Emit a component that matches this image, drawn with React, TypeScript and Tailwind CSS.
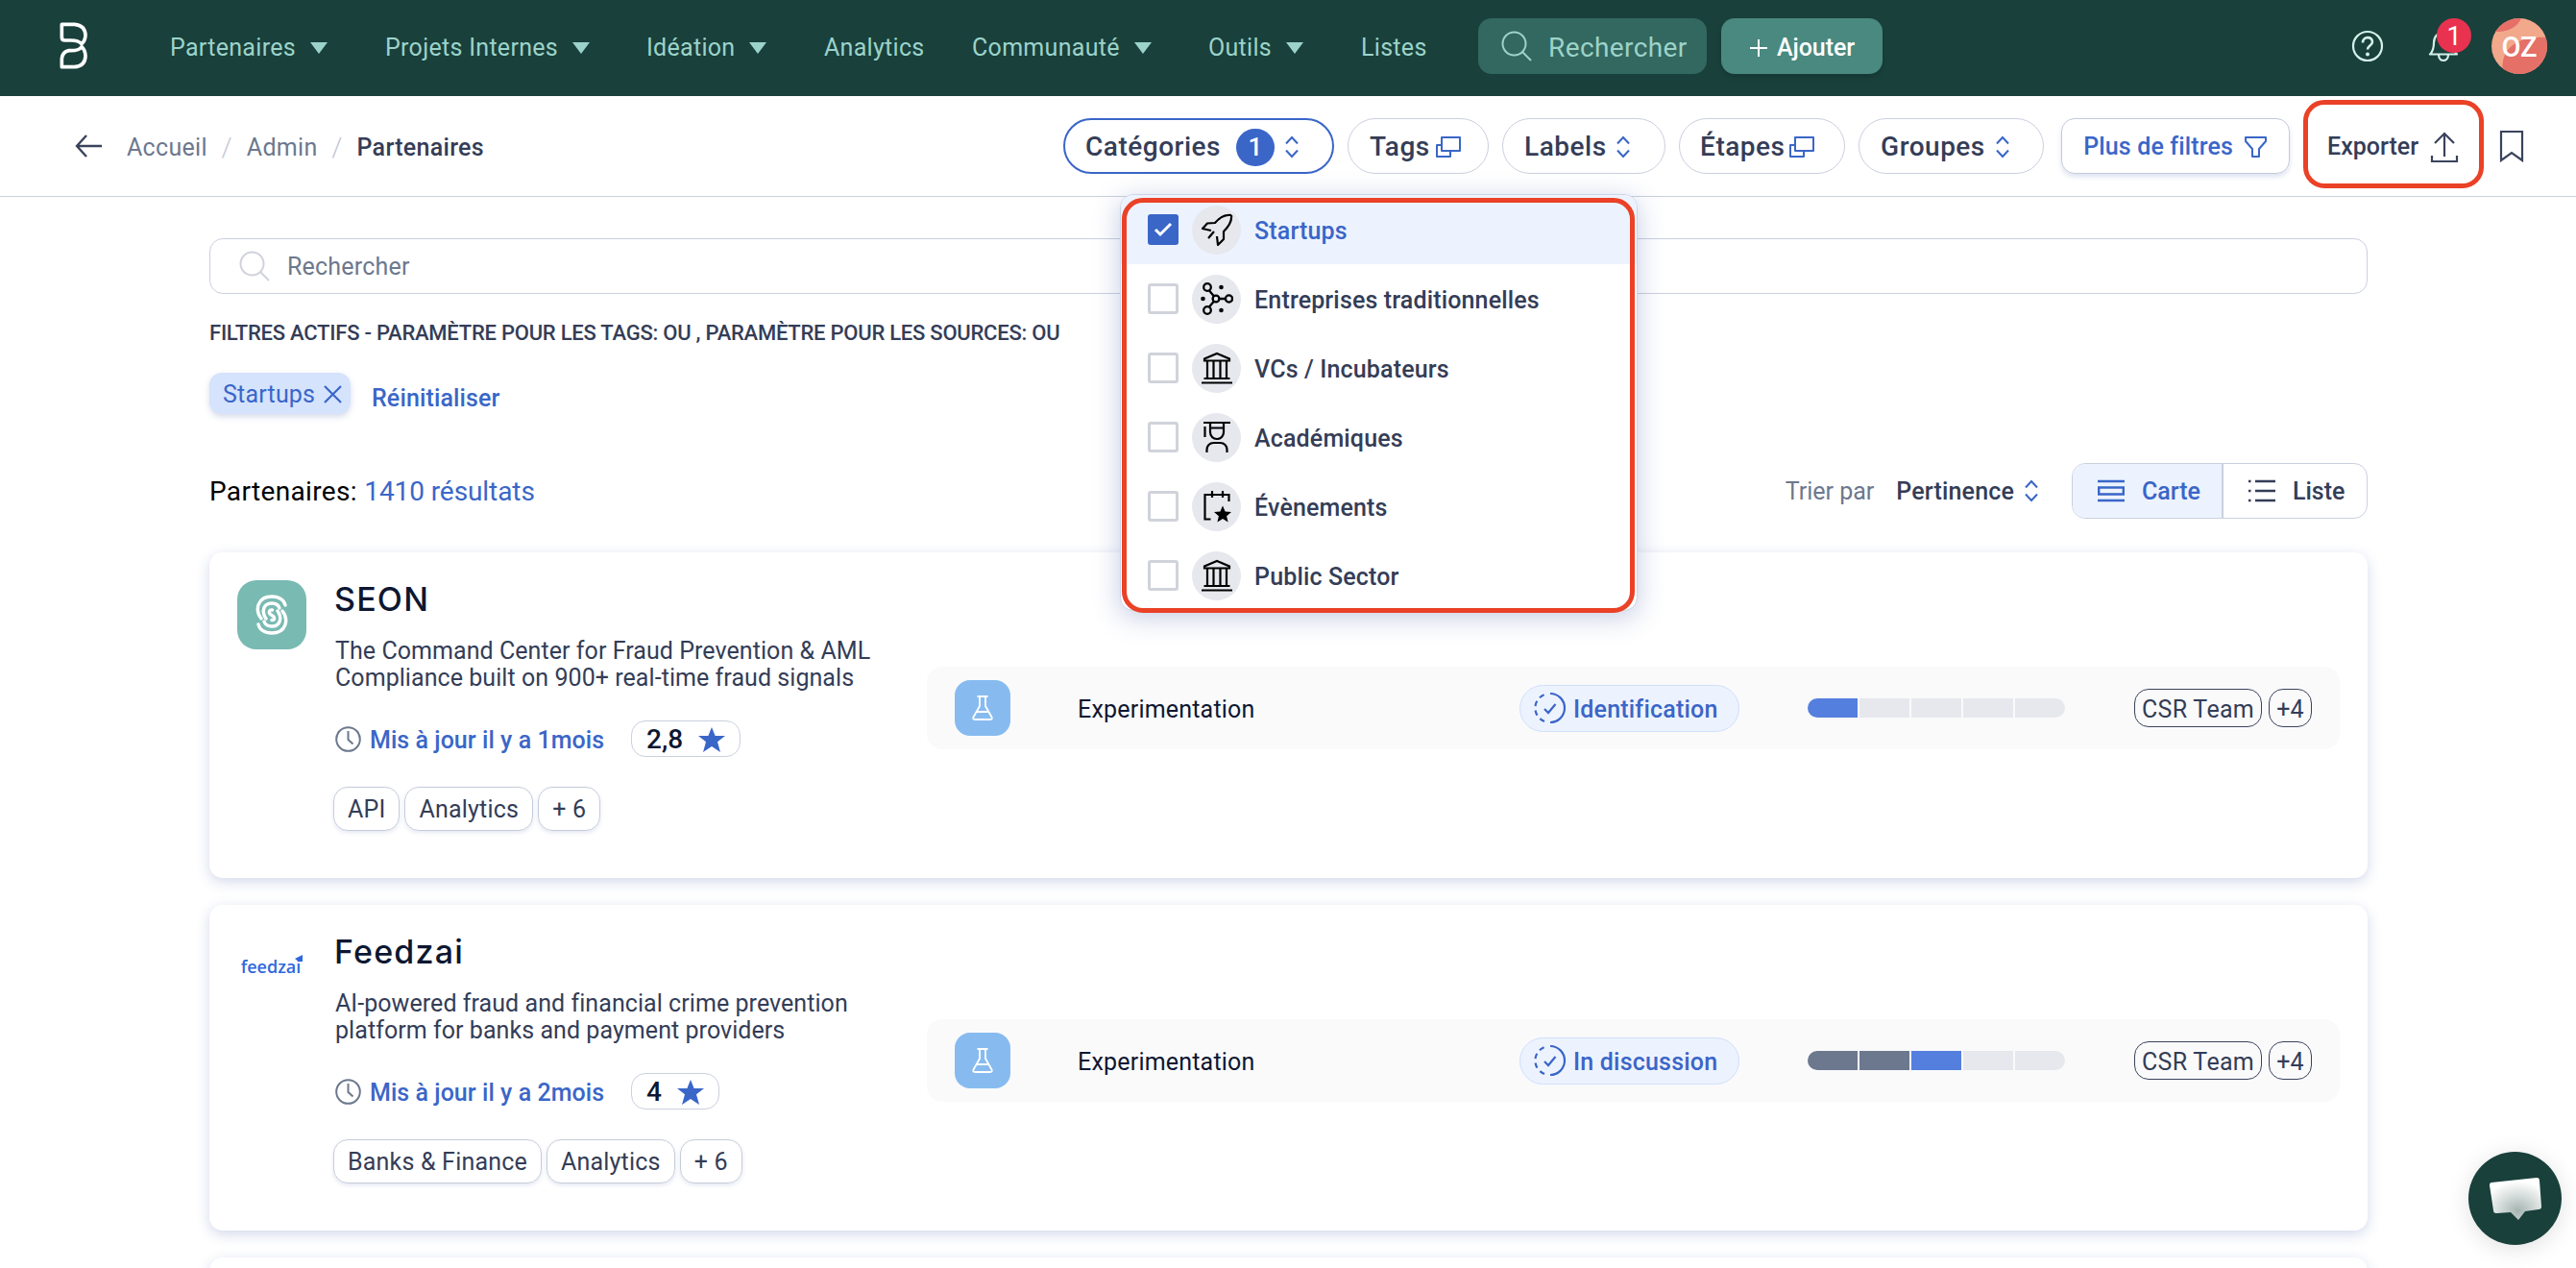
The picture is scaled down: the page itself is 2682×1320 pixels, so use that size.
import React from "react";

const Caret = () => (
  <svg width="18" height="12" viewBox="0 0 18 12" fill="currentColor">
    <path d="M0 0h18L9 12z" />
  </svg>
);

const Chevrons = () => (
  <svg
    width="16"
    height="24"
    viewBox="0 0 16 24"
    fill="none"
    stroke="#3a66c8"
    strokeWidth="2"
  >
    <path d="M2 8.500 8 2l6 6.500M2 15.500 8 22l6-6.500" />
  </svg>
);

const Copies = () => (
  <svg
    width="27"
    height="24"
    viewBox="0 0 27 24"
    fill="none"
    stroke="#3a66c8"
    strokeWidth="2"
  >
    <path d="M7 2h19v14H7zM6 10H2v12h14v-5" strokeLinejoin="round" />
  </svg>
);

const Search = ({ className }: { className: string }) => (
  <svg
    width="32"
    height="32"
    viewBox="0 0 32 32"
    fill="none"
    stroke="currentColor"
    strokeWidth="2"
    className={className}
  >
    <circle cx="13.500" cy="13.500" r="12" />
    <path d="m22 22 9 9" />
  </svg>
);

const Rocket = () => (
  <svg
    width="34"
    height="34"
    viewBox="0 0 34 34"
    fill="none"
    stroke="#000"
    strokeWidth="2.200"
    strokeLinejoin="round"
  >
    <path d="M32 2C25 1 20 4 15 10L7 10.500 2 16l9 2M32 2c1 7-3 12-8 17v8l-6 6-1-9M14 19l-6 7" />
  </svg>
);

const Network = () => (
  <svg
    width="34"
    height="34"
    viewBox="0 0 34 34"
    fill="none"
    stroke="#000"
    strokeWidth="2.300"
  >
    <circle cx="7" cy="5" r="3.800" />
    <circle cx="7" cy="29" r="3.800" />
    <circle cx="16" cy="17" r="3.400" />
    <circle cx="29.500" cy="17" r="3.600" />
    <path d="m9 8.500 5 6M14 19.500l-5 6M19.500 17H26" />
    <g fill="#000" stroke="none">
      <circle cx="21.500" cy="5" r="2.300" />
      <circle cx="21.500" cy="29" r="2.300" />
      <circle cx="2.500" cy="17" r="2.300" />
    </g>
  </svg>
);

const Bank = () => (
  <svg
    width="34"
    height="34"
    viewBox="0 0 34 34"
    fill="none"
    stroke="#000"
    strokeWidth="2.200"
  >
    <path d="M4 9.500V7.500L17 2l13 5.500v2zM7 10v18M13.500 10v18M20.500 10v18M27 10v18M3.500 28h27M1 32.500h32" />
  </svg>
);

const Student = () => (
  <svg
    width="34"
    height="34"
    viewBox="0 0 34 34"
    fill="none"
    stroke="#000"
    strokeWidth="2.200"
  >
    <path d="M3 2h28M4.500 6v11M10 3v9c0 4 3 7 7 7s7-3 7-7V3M10 7.500h14M6.500 33v-3c0-4 3-7 7-7h7c4 0 7 3 7 7v3" />
  </svg>
);

const Event = () => (
  <svg
    width="34"
    height="34"
    viewBox="0 0 34 34"
    fill="none"
    stroke="#000"
    strokeWidth="2.200"
  >
    <path d="M10.500 30.500h-6V5h25v7M12 1v7M23 1v7" />
    <path
      d="m23 16.500 2.600 6 6.400.5-4.900 4.200 1.500 6.300-5.600-3.400-5.600 3.400 1.500-6.300L14 23l6.400-.5z"
      fill="#000"
      stroke="none"
    />
  </svg>
);

const Flask = () => (
  <svg
    width="24"
    height="28"
    viewBox="0 0 24 28"
    fill="none"
    stroke="#fff"
    strokeWidth="1.800"
    strokeLinejoin="round"
  >
    <path d="M6.500 2h11M9 2v10L2.500 23.500Q1.500 26 4 26h16q2.500 0 1.500-2.500L15 12V2M5.500 18h13" />
  </svg>
);

const StatusIcon = () => (
  <svg
    width="34"
    height="34"
    viewBox="0 0 34 34"
    fill="none"
    stroke="#3a66c8"
    strokeWidth="2.200"
  >
    <path d="M17 2a15 15 0 0 1 0 30" />
    <path d="M11 31A15 15 0 0 1 11 3" strokeDasharray="5.500 4.500" />
    <path d="m11 18 4 4 7.500-9" />
  </svg>
);

const SeonLogo = () => (
  <div className="flex h-[72px] w-[72px] items-center justify-center rounded-[20px] bg-[#79bab2]">
    <svg
      width="34"
      height="42"
      viewBox="0 0 34 42"
      fill="none"
      stroke="#fff"
      strokeWidth="3.400"
      strokeLinecap="round"
    >
      <path d="M6 25C-1 16 2 2 17 2c8 0 13 4 14 9" />
      <path d="M11 25C6 18 8 9 17 9c4 0 7 2 8 5" />
      <path d="M28 17c7 9 4 23-11 23-8 0-13-4-14-9" />
      <path d="M23 17c5 7 3 16-6 16-4 0-7-2-8-5" />
      <path d="M17.500 16c-3-.5-4 2-2.500 4l4 3c1.500 2 .5 4-2 3.500" />
    </svg>
  </div>
);

const FeedzaiLogo = () => (
  <div className="relative flex h-[72px] w-[72px] items-center justify-center">
    <span className="-mt-[2px] mr-[2px] font-['Open_Sans',sans-serif] text-[18px] leading-none font-semibold text-[#2f68dc]">
      feedzai
    </span>
    <svg
      width="8"
      height="7"
      viewBox="0 0 8 7"
      className="absolute top-[23px] left-[60px]"
    >
      <path d="M0 4 8 0v7H4z" fill="#2f68dc" />
    </svg>
  </div>
);

const navItems = [
  { label: "Partenaires", menu: true, width: "w-[224px]" },
  { label: "Projets Internes", menu: true, width: "w-[272px]" },
  { label: "Idéation", menu: true, width: "w-[185px]" },
  { label: "Analytics", menu: false, width: "w-[154px]" },
  { label: "Communauté", menu: true, width: "w-[246px]" },
  { label: "Outils", menu: true, width: "w-[159px]" },
  { label: "Listes", menu: false, width: "w-[122px]" },
];

const categories = [
  { label: "Startups", icon: <Rocket />, checked: true },
  { label: "Entreprises traditionnelles", icon: <Network />, checked: false },
  { label: "VCs / Incubateurs", icon: <Bank />, checked: false },
  { label: "Académiques", icon: <Student />, checked: false },
  { label: "Évènements", icon: <Event />, checked: false },
  { label: "Public Sector", icon: <Bank />, checked: false },
];

const partners = [
  {
    name: "SEON",
    logo: <SeonLogo />,
    lines: [
      "The Command Center for Fraud Prevention & AML",
      "Compliance built on 900+ real-time fraud signals",
    ],
    updated: "Mis à jour il y a 1mois",
    rating: "2,8",
    tags: ["API", "Analytics", "+ 6"],
    status: "Identification",
    steps: ["bg-[#557fde]", "bg-[#e6e8ed]", "bg-[#e6e8ed]", "bg-[#e6e8ed]", "bg-[#e6e8ed]"],
  },
  {
    name: "Feedzai",
    logo: <FeedzaiLogo />,
    lines: [
      "AI-powered fraud and financial crime prevention",
      "platform for banks and payment providers",
    ],
    updated: "Mis à jour il y a 2mois",
    rating: "4",
    tags: ["Banks & Finance", "Analytics", "+ 6"],
    status: "In discussion",
    steps: ["bg-[#6c788e]", "bg-[#6c788e]", "bg-[#557fde]", "bg-[#e6e8ed]", "bg-[#e6e8ed]"],
  },
];

const Header = () => (
  <header className="flex h-[100px] items-center bg-[#19403b] pr-[30px] pl-[62px] text-[#9bd3ca]">
    <div className="-mt-1 w-[115px]">
      <svg
        width="30"
        height="50"
        viewBox="69 41 90 150"
        fill="none"
        stroke="#fff"
        strokeWidth="11"
        strokeLinejoin="round"
      >
        <path d="M76 48h40q33 3 34 34-1 18-12 27-10-11-33-11H86q-10 0-10-10z" />
        <path d="M76 181h40q33-3 34-34-1-19-12-29-8 12-33 12h-7q-20 4-22 25z" />
      </svg>
    </div>
    <nav className="flex tracking-[0.300px]">
      {navItems.map((item) => (
        <div key={item.label} className={`flex items-center gap-[15px] ${item.width}`}>
          <span>{item.label}</span>
          {item.menu && <Caret />}
        </div>
      ))}
    </nav>
    <div className="-mt-1 flex h-[58px] w-[238px] items-center rounded-[14px] bg-[#326860] pl-6">
      <Search className="mr-[17px]" />
      <span className="pt-[3px] text-[28px] tracking-[0.400px]">Rechercher</span>
    </div>
    <button className="-mt-1 ml-[15px] flex h-[58px] w-[168px] items-center justify-center gap-[9px] rounded-[14px] bg-[#49897f] pt-[3px] font-medium tracking-[-0.070px] text-white shadow-md">
      <svg width="20" height="20" viewBox="0 0 20 20" stroke="#fff" strokeWidth="2">
        <path d="M10 1v18M1 10h18" />
      </svg>
      Ajouter
    </button>
    <div className="-mt-1 ml-auto flex items-center text-[#d3f0ea]">
      <svg
        width="34"
        height="34"
        viewBox="0 0 34 34"
        fill="none"
        stroke="currentColor"
        strokeWidth="2.200"
      >
        <circle cx="17" cy="17" r="15" />
        <path d="M12 13.500c0-7 10-7 10-1 0 4-5 4-5 8" strokeWidth="2.600" />
        <circle cx="17" cy="25.500" r="2" fill="currentColor" stroke="none" />
      </svg>
      <div className="relative mr-[34px] ml-[46px]">
        <svg
          width="32"
          height="34"
          viewBox="0 0 32 34"
          fill="none"
          stroke="currentColor"
          strokeWidth="2.200"
          strokeLinejoin="round"
        >
          <path d="M2 25.500h28c-4-4-4-8-4-12C26 7 22 3 16 3S6 7 6 13.500c0 4 0 8-4 12zM11 26c0 8 10 8 10 0" />
        </svg>
        <div className="absolute -top-[12px] left-[9px] flex h-9 w-9 items-center justify-center rounded-full bg-[#e83250] pt-[2px] text-[27px] text-white">
          1
        </div>
      </div>
      <div className="relative flex h-[58px] w-[58px] items-center justify-center overflow-hidden rounded-full bg-[#f2a88b] text-[29px] font-medium text-white">
        <svg width="58" height="58" viewBox="0 0 58 58" className="absolute inset-0">
          <path d="M0 14h8q18-1 24-16L0-4z" fill="#e57068" />
          <path d="M12 58q-3-20 10-30t36-8v38z" fill="#e57068" />
        </svg>
        <span className="relative pt-[3px]">OZ</span>
      </div>
    </div>
  </header>
);

const CategoryMenu = () => (
  <div className="absolute top-[79px] left-[59px] z-20 h-[434px] w-[539px] rounded-[14px] border border-[#cdd5e6] bg-white text-[25px] tracking-[0.150px] shadow-[0_6px_28px_rgba(70,95,170,0.32)]">
    {categories.map((category) => (
      <div
        key={category.label}
        className={
          category.checked
            ? "flex h-[72px] items-center rounded-t-[13px] bg-[#edf3fe] pl-7 text-[#3a66c8]"
            : "flex h-[72px] items-center pl-7"
        }
      >
        {category.checked ? (
          <div className="flex h-8 w-8 items-center justify-center rounded-[3px] bg-[#3a66c8]">
            <svg width="20" height="16" viewBox="0 0 20 16" fill="none" stroke="#fff" strokeWidth="3">
              <path d="m2 8 5 5L18 2" />
            </svg>
          </div>
        ) : (
          <div className="h-8 w-8 rounded-[3px] border-[3px] border-[#d0d3da]" />
        )}
        <div className="mr-[14px] ml-[14px] flex h-[51px] w-[51px] items-center justify-center rounded-full bg-[#e6e8ed]">
          {category.icon}
        </div>
        <span className="pt-[3px]">{category.label}</span>
      </div>
    ))}
    <div className="absolute top-[3px] left-[1px] h-[432px] w-[534px] rounded-[22px] border-[5px] border-[#ea4127]" />
  </div>
);

const Toolbar = () => (
  <div className="flex h-[105px] items-center border-b border-[#cbd0de] pr-[54px] pl-[78px]">
    <svg
      width="28"
      height="24"
      viewBox="0 0 28 24"
      fill="none"
      stroke="#3a435c"
      strokeWidth="2.400"
    >
      <path d="M28 12H2M12 1 2 12l10 11" />
    </svg>
    <div className="ml-[26px] flex items-center pt-[3px] tracking-[0.300px] text-[#6c788e]">
      <span>Accueil</span>
      <span className="w-[41px] text-center text-[28px] font-light text-[#c3c8d4]">/</span>
      <span>Admin</span>
      <span className="w-[41px] text-center text-[28px] font-light text-[#c3c8d4]">/</span>
      <span className="font-medium text-[#343d57]">Partenaires</span>
    </div>

    <div className="ml-auto flex items-center gap-[14px] text-[28px] font-medium tracking-[0.500px]">
      <div className="relative">
        <div className="flex h-[58px] w-[282px] items-center rounded-full border-2 border-[#3a66c8] pt-[2px] pl-[21px]">
          Catégories
          <span className="mr-[10px] ml-4 flex h-[39px] w-10 items-center justify-center rounded-full bg-[#3a66c8] pt-[1px] text-[26px] tracking-normal text-white">
            1
          </span>
          <Chevrons />
        </div>
        <CategoryMenu />
      </div>
      <div className="flex h-[58px] w-[147px] items-center gap-[5px] rounded-full border border-[#cbd0de] pt-[2px] pl-[22px]">
        Tags
        <Copies />
      </div>
      <div className="flex h-[58px] w-[170px] items-center gap-[9px] rounded-full border border-[#cbd0de] pt-[2px] pl-[22px]">
        Labels
        <Chevrons />
      </div>
      <div className="flex h-[58px] w-[173px] items-center gap-1 rounded-full border border-[#cbd0de] pt-[2px] pl-[21px]">
        Étapes
        <Copies />
      </div>
      <div className="flex h-[58px] w-[193px] items-center gap-[10px] rounded-full border border-[#cbd0de] pt-[2px] pl-[22px]">
        Groupes
        <Chevrons />
      </div>
    </div>
    <button className="ml-[18px] flex h-[58px] w-[238px] items-center justify-center gap-[11px] rounded-[14px] border border-[#c3cadb] pt-[2px] font-medium tracking-[0.130px] text-[#3a66c8] shadow-[0_3px_5px_rgba(70,95,170,0.18)]">
      Plus de filtres
      <svg
        width="25"
        height="24"
        viewBox="0 0 25 24"
        fill="none"
        stroke="currentColor"
        strokeWidth="2"
        strokeLinejoin="round"
      >
        <path d="M2 2h21v4l-7 8v8H9v-8L2 6z" />
      </svg>
    </button>
    <div className="relative ml-[39px] flex items-center gap-3 pt-[2px] font-medium">
      Exporter
      <svg
        width="30"
        height="34"
        viewBox="0 0 30 34"
        fill="none"
        stroke="#3a435c"
        strokeWidth="2.200"
      >
        <path d="M15 27V3M5 13 15 3l10 10M2 26v6h26v-6" />
      </svg>
      <div className="absolute -top-[28px] -left-[25px] h-[92px] w-[188px] rounded-[22px] border-[5px] border-[#ea4127]" />
    </div>
    <svg
      width="26"
      height="34"
      viewBox="0 0 26 34"
      fill="none"
      stroke="#3a435c"
      strokeWidth="2.200"
      className="ml-[42px]"
    >
      <path d="M2 2h22v30l-11-8-11 8z" />
    </svg>
  </div>
);

const PartnerCard = ({ partner }: { partner: (typeof partners)[number] }) => (
  <article className="flex h-[339px] rounded-[14px] bg-white pr-[29px] pl-[29px] shadow-[0_4px_14px_rgba(70,95,170,0.24)]">
    <div className="w-[101px] pt-[29px]">{partner.logo}</div>
    <div className="w-[617px] pt-[29px]">
      <h2 className="h-10 font-['Inter',sans-serif] text-[34px] leading-10 font-medium tracking-[1.200px] text-[#0d1731] [font-optical-sizing:none]">
        {partner.name}
      </h2>
      <p className="mt-5 pl-[1px] leading-7 tracking-[0.060px]">
        {partner.lines[0]}
        <br />
        {partner.lines[1]}
      </p>
      <div className="mt-[30px] flex h-[38px] items-center pl-[1px]">
        <svg
          width="27"
          height="27"
          viewBox="0 0 27 27"
          fill="none"
          stroke="#6c788e"
          strokeWidth="2"
        >
          <circle cx="13.500" cy="13.500" r="12.300" />
          <path d="M13.500 5v9l5 4.500" />
        </svg>
        <span className="ml-[9px] pt-[3px] font-medium tracking-[0.050px] text-[#3a66c8]">
          {partner.updated}
        </span>
        <div className="ml-7 flex h-[38px] items-center gap-4 rounded-[15px] border border-[#cbd0de] px-[15px] pt-[2px] text-[28px] font-medium text-[#0d1731]">
          {partner.rating}
          <svg width="28" height="26" viewBox="0 0 28 26" fill="#3a66c8">
            <path d="m14 0 3.600 9H28l-8 6.300L23 26l-9-6-9 6 3-10.700L0 9h10.400z" />
          </svg>
        </div>
      </div>
      <div className="mt-[31px] -ml-[1px] flex gap-[5px]">
        {partner.tags.map((tag) => (
          <span
            key={tag}
            className="flex h-[46px] items-center rounded-[15px] border border-[#c6ccda] px-[14px] pt-[2px] tracking-[0.200px] shadow-[0_2px_4px_rgba(70,95,170,0.14)]"
          >
            {tag}
          </span>
        ))}
      </div>
    </div>
    <div className="mt-[119px] flex h-[86px] w-[1471px] items-center rounded-[16px] bg-[#fafafb] pl-[29px] tracking-[0.200px]">
      <div className="w-[128px]">
        <div className="flex h-[58px] w-[58px] items-center justify-center rounded-[16px] bg-[#87bbf0]">
          <Flask />
        </div>
      </div>
      <div className="w-[460px] pt-[3px] text-[#0d1731]">Experimentation</div>
      <div className="w-[300px]">
        <div className="flex h-[49px] w-[229px] items-center gap-[7px] rounded-full border border-[#d0dffb] bg-[#edf3fe] pl-[14px] font-medium text-[#3a66c8]">
          <StatusIcon />
          <span className="pt-[3px]">{partner.status}</span>
        </div>
      </div>
      <div className="w-[340px]">
        <div className="flex h-5 w-[268px] gap-[2px] overflow-hidden rounded-full">
          {partner.steps.map((step, i) => (
            <div key={i} className={`flex-1 ${step}`} />
          ))}
        </div>
      </div>
      <span className="flex h-10 w-[133px] items-center justify-center rounded-[15px] border border-[#3a435c] pt-[3px] tracking-[0.300px]">
        CSR Team
      </span>
      <span className="ml-[7px] flex h-10 w-[45px] items-center justify-center rounded-[15px] border border-[#3a435c] pt-[3px]">
        +4
      </span>
    </div>
  </article>
);

const App = () => {
  return (
    <div className="relative h-[1320px] overflow-hidden bg-white font-['Roboto',sans-serif] text-[25px] text-[#343d57]">
      <Header />
      <Toolbar />
      <main className="w-[2465px] pt-[43px] pl-[218px]">
        <div className="flex h-[58px] items-center rounded-[14px] border border-[#cbd0de] pl-[30px] text-[#6c788e]">
          <Search className="mr-[18px] text-[#d0d3dc]" />
          <span className="pt-[2px] tracking-[0.200px]">Rechercher</span>
        </div>
        <div className="mt-[26px] h-[30px] text-[22px] leading-[30px] font-medium tracking-[-0.240px]">
          FILTRES ACTIFS - PARAMÈTRE POUR LES TAGS: OU , PARAMÈTRE POUR LES SOURCES: OU
        </div>
        <div className="mt-[26px] flex items-start">
          <div className="flex h-[43px] w-[147px] items-center gap-[9px] rounded-[13px] bg-[#d5e3fd] pt-[2px] pl-[14px] tracking-[0.200px] text-[#3a66c8] shadow-[0_3px_6px_rgba(70,95,170,0.22)]">
            Startups
            <svg width="19" height="19" viewBox="0 0 19 19" stroke="currentColor" strokeWidth="2.200">
              <path d="m1 1 17 17M18 1 1 18" />
            </svg>
          </div>
          <span className="ml-[22px] pt-[9px] leading-[36px] font-medium tracking-[0.130px] text-[#3a66c8]">
            Réinitialiser
          </span>
        </div>
        <div className="mt-[49px] flex h-[58px] items-center">
          <div className="pt-[2px] text-[28px] tracking-[0.350px] text-black">
            Partenaires: <span className="tracking-[-0.080px] text-[#3a66c8]">1410 résultats</span>
          </div>
          <span className="ml-auto pt-[2px] text-[#6c788e]">Trier par</span>
          <span className="mr-[10px] ml-[23px] pt-[2px] font-medium tracking-[0.170px]">
            Pertinence
          </span>
          <Chevrons />
          <div className="ml-[34px] flex h-[58px] w-[308px] rounded-[14px] border border-[#cbd0de] font-medium">
            <div className="flex w-[157px] items-center rounded-l-[13px] border-r-2 border-[#cbd0de] bg-[#edf3fe] pl-[26px] text-[#3a66c8]">
              <svg
                width="28"
                height="26"
                viewBox="0 0 28 26"
                fill="none"
                stroke="currentColor"
                strokeWidth="2.400"
                className="mr-[18px]"
              >
                <path d="M0 3h28M1.200 9.500h25.600v7H1.200zM0 23h28" />
              </svg>
              <span className="pt-[2px]">Carte</span>
            </div>
            <div className="flex items-center pl-[26px]">
              <svg
                width="28"
                height="26"
                viewBox="0 0 28 26"
                stroke="currentColor"
                strokeWidth="2.400"
                className="mr-[18px]"
              >
                <path d="M7 3h21M7 13h21M7 23h21M0 3h2.500M0 13h2.500M0 23h2.500" />
              </svg>
              <span className="pt-[2px]">Liste</span>
            </div>
          </div>
        </div>
        <div className="mt-[35px] flex flex-col gap-7">
          {partners.map((partner) => (
            <PartnerCard key={partner.name} partner={partner} />
          ))}
          <article className="h-[339px] rounded-[14px] bg-white shadow-[0_4px_14px_rgba(70,95,170,0.24)]" />
        </div>
      </main>

      {/* chat launcher */}
      <button className="absolute right-[15px] bottom-6 flex h-[97px] w-[97px] items-center justify-center rounded-full bg-[#19403b] shadow-[0_4px_24px_rgba(0,0,0,0.12)]">
        <svg width="56" height="48" viewBox="0 0 56 48">
          <defs>
            <radialGradient id="bubble" cx="0.550" cy="0.780" r="0.700">
              <stop offset="0" stopColor="#a6b5b2" />
              <stop offset="0.500" stopColor="#d3dbd9" />
              <stop offset="1" stopColor="#ffffff" />
            </radialGradient>
          </defs>
          <path
            d="M3 7 50 2q3 0 3 3l2 27q0 3-3 3l-14 2-7 9-8-8-15 1q-3 0-3-3L1 10q0-3 2-3z"
            fill="url(#bubble)"
          />
        </svg>
      </button>
    </div>
  );
};

export default App;
